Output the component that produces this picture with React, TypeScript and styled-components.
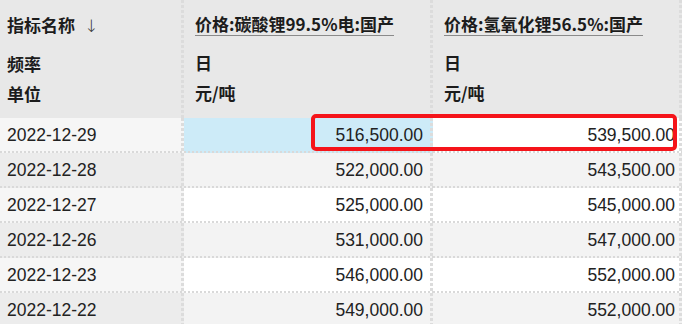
import React from 'react'
import styled, { createGlobalStyle } from 'styled-components'

const GlobalStyle = createGlobalStyle`
  html, body {
    margin: 0;
    padding: 0;
    background: #ffffff;
  }
  body {
    font-family: 'Liberation Sans', 'Noto Sans CJK SC', sans-serif;
    color: #222;
  }
`

type Row = { date: string; lce: string; lioh: string }

const rows: Row[] = [
  { date: '2022-12-29', lce: '516,500.00', lioh: '539,500.00' },
  { date: '2022-12-28', lce: '522,000.00', lioh: '543,500.00' },
  { date: '2022-12-27', lce: '525,000.00', lioh: '545,000.00' },
  { date: '2022-12-26', lce: '531,000.00', lioh: '547,000.00' },
  { date: '2022-12-23', lce: '546,000.00', lioh: '552,000.00' },
  { date: '2022-12-22', lce: '549,000.00', lioh: '552,000.00' },
]

const columns = [
  { name: '价格:碳酸锂99.5%电:国产', freq: '日', unit: '元/吨' },
  { name: '价格:氢氧化锂56.5%:国产', freq: '日', unit: '元/吨' },
]

function App() {
  return (
    <>
      <GlobalStyle />
      <Table>
        <HeaderCell $first>
          <Title>
            指标名称<Arrow>↓</Arrow>
          </Title>
          <Meta>频率</Meta>
          <Meta>单位</Meta>
        </HeaderCell>
        {columns.map((c) => (
          <HeaderCell key={c.name}>
            <Title>
              <Underlined>{c.name}</Underlined>
            </Title>
            <Meta>{c.freq}</Meta>
            <Meta>{c.unit}</Meta>
          </HeaderCell>
        ))}

        {rows.map((r, i) => (
          <React.Fragment key={r.date}>
            <DateCell $odd={i % 2 === 1}>{r.date}</DateCell>
            <ValueCell $tone={i === 0 ? 'selected' : i % 2 === 1 ? 'grey' : 'white'}>
              {r.lce}
            </ValueCell>
            <ValueCell $tone={i % 2 === 1 ? 'grey' : 'white'} $last>
              {r.lioh}
            </ValueCell>
          </React.Fragment>
        ))}
        <Highlight />
      </Table>
    </>
  )
}

export default App

const vDots = `linear-gradient(to bottom, #dcdcdc 60%, transparent 60%)`
const hDots = `linear-gradient(to right, #d9d9d9 50%, transparent 50%)`

const Table = styled.div`
  position: relative;
  display: grid;
  grid-template-columns: 184px 249px 249px;
  grid-template-rows: 118px repeat(6, 35px);
  width: 682px;
  height: 324px;
  overflow: hidden;
  background: #e8e8e8;
`

const HeaderCell = styled.div<{ $first?: boolean }>`
  box-sizing: border-box;
  padding: ${(p) => (p.$first ? '13px 0 0 7px' : '12px 0 0 11px')};
  background-color: #e8e8e8;
  background-image: ${vDots};
  background-size: 3px 5px;
  background-repeat: repeat-y;
  background-position: right top;
  font-family: 'Noto Sans CJK SC', 'Liberation Sans', sans-serif;
  font-weight: 700;
  font-size: 17px;
  color: #1c1c1c;
  display: flex;
  flex-direction: column;
`

const Title = styled.div`
  height: 24px;
  line-height: 24px;
  margin-bottom: 12px;
  white-space: nowrap;
`

const Arrow = styled.span`
  font-family: 'DejaVu Sans', sans-serif;
  font-weight: 300;
  font-size: 17px;
  color: #333;
  margin-left: 9px;
`

const Underlined = styled.span`
  display: inline-block;
  line-height: 22px;
  border-bottom: 1px solid #8a8a8a;
`

const Meta = styled.div`
  height: 30px;
  line-height: 30px;
`

const Cell = styled.div`
  box-sizing: border-box;
  display: flex;
  align-items: center;
  padding-bottom: 1px;
  font-size: 17.5px;
  color: #222;
  background-image: ${hDots}, ${vDots};
  background-size: 4px 2px, 3px 5px;
  background-repeat: repeat-x, repeat-y;
  background-position: left bottom, right top;
`

const DateCell = styled(Cell)<{ $odd: boolean }>`
  padding-left: 7px;
  background-color: ${(p) => (p.$odd ? '#ececec' : '#f6f6f6')};
`

const tones = {
  selected: '#cdebf8',
  grey: '#f3f3f3',
  white: '#ffffff',
}

const ValueCell = styled(Cell)<{ $tone: keyof typeof tones; $last?: boolean }>`
  justify-content: flex-end;
  padding-right: ${(p) => (p.$last ? '7px' : '10px')};
  background-color: ${(p) => tones[p.$tone]};
`

const Highlight = styled.div`
  position: absolute;
  left: 311px;
  top: 114px;
  width: 366px;
  height: 37px;
  box-sizing: border-box;
  border: 4px solid #f5141a;
  border-radius: 5px;
  pointer-events: none;
`
